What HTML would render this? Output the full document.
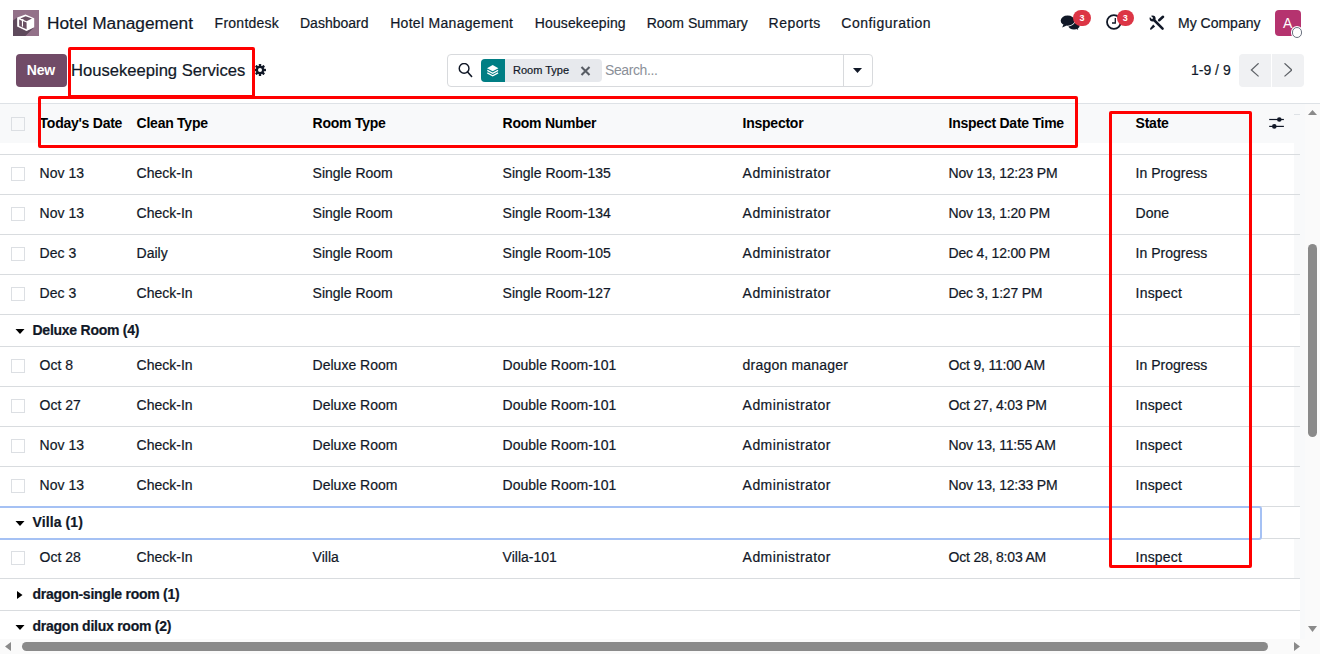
<!DOCTYPE html><html><head><meta charset="utf-8"><style>
*{margin:0;padding:0;box-sizing:border-box}
html,body{width:1320px;height:654px;overflow:hidden;background:#fff;font-family:"Liberation Sans",sans-serif}
.t{position:absolute;white-space:nowrap;-webkit-text-stroke:0.2px currentColor}
.a{position:absolute}
.cb{position:absolute;width:14px;height:14px;border:1px solid #dcdfe3;background:#fff;border-radius:0}
.sep{position:absolute;left:0;width:1300px;height:1px;background:#d9dcdf}
.rb{position:absolute;border:3px solid #ff0000;border-radius:2px}
</style></head><body>
<svg class="a" style="left:13px;top:10px" width="26" height="26" viewBox="0 0 26 26">
<rect width="26" height="26" fill="#937189"/>
<path d="M0 10.5 L4.2 7.4 L4.2 16.6 L13.5 21 L21.2 17.2 L12.4 26 L0 26 Z" fill="#5f4a5c"/>
<path d="M12.5 4.5 L21.2 8.2 L21.2 17.2 L13.5 21 L4.2 16.6 L4.2 7.4 Z" fill="#fff"/>
<path d="M7.3 8.6 L12.6 6.3 L19 8.4 L13.6 11.2 Z" fill="#6a5063"/>
<path d="M6.2 9.6 L13.6 12.6 L13.6 19.3 L6.2 15.9 Z" fill="#6a5063"/>
<rect x="7.7" y="9.2" width="2.8" height="1.1" fill="#fff"/><rect x="8.9" y="9.6" width="1.1" height="7" fill="#fff"/>
</svg>
<div class="t" style="left:47px;top:12.600000000000001px;font-size:17.3px;line-height:20px;font-weight:400;color:#111827;">Hotel Management</div>
<div class="t" style="left:214.6px;top:13.0px;font-size:14px;line-height:20px;font-weight:400;color:#111827;letter-spacing:0.25px">Frontdesk</div>
<div class="t" style="left:300px;top:13.0px;font-size:14px;line-height:20px;font-weight:400;color:#111827;letter-spacing:0px">Dashboard</div>
<div class="t" style="left:390.2px;top:13.0px;font-size:14px;line-height:20px;font-weight:400;color:#111827;letter-spacing:0.3px">Hotel Management</div>
<div class="t" style="left:534.8px;top:13.0px;font-size:14px;line-height:20px;font-weight:400;color:#111827;letter-spacing:0.12px">Housekeeping</div>
<div class="t" style="left:646.7px;top:13.0px;font-size:14px;line-height:20px;font-weight:400;color:#111827;letter-spacing:0px">Room Summary</div>
<div class="t" style="left:768.6px;top:13.0px;font-size:14px;line-height:20px;font-weight:400;color:#111827;letter-spacing:0.45px">Reports</div>
<div class="t" style="left:841.3px;top:13.0px;font-size:14px;line-height:20px;font-weight:400;color:#111827;letter-spacing:0.5px">Configuration</div>
<div class="t" style="left:1178px;top:13.2px;font-size:14px;line-height:20px;font-weight:400;color:#111827;">My Company</div>
<svg class="a" style="left:1058px;top:12px" width="24" height="22" viewBox="0 0 24 22">
<ellipse cx="16" cy="14" rx="5.6" ry="3.5" fill="#111827"/>
<path d="M17 16 L20.2 18 L19 14.5 Z" fill="#111827"/>
<ellipse cx="9.6" cy="8.7" rx="7.6" ry="5.9" fill="#fff"/>
<ellipse cx="9.6" cy="8.7" rx="6.9" ry="5.1" fill="#111827"/>
<path d="M5.5 12.2 L4.2 15.6 L8.8 13.4 Z" fill="#111827"/>
</svg>
<div class="a" style="left:1073px;top:10px;width:18px;height:16px;border-radius:8px;background:#dc3545;color:#fff;font-size:9px;font-weight:bold;line-height:16px;text-align:center">3</div>
<svg class="a" style="left:1105px;top:14px" width="18" height="18" viewBox="0 0 18 18">
<circle cx="8.9" cy="8" r="6.9" fill="none" stroke="#111827" stroke-width="1.8"/>
<path d="M10.3 3.9 V9 H7" fill="none" stroke="#111827" stroke-width="1.3"/>
</svg>
<div class="a" style="left:1116.5px;top:10px;width:17.5px;height:16px;border-radius:8px;background:#dc3545;color:#fff;font-size:9px;font-weight:bold;line-height:16px;text-align:center">3</div>
<svg class="a" style="left:1144px;top:10px" width="26" height="26" viewBox="0 0 26 26">
<path d="M10.5 10.5 L18.6 18.6" stroke="#111827" stroke-width="2.5" stroke-linecap="round"/>
<circle cx="8.6" cy="8.6" r="3" fill="#111827"/>
<path d="M8.6 8.6 L5 5" stroke="#fff" stroke-width="1.7"/>
<path d="M15.2 10.2 L19 6.8" stroke="#111827" stroke-width="2.6" stroke-linecap="round"/>
<path d="M9.2 14.6 L11.1 16.4 L7.5 19.6 L6.1 19.7 L6.2 18.2 Z" fill="#111827"/>
</svg>
<div class="a" style="left:1275px;top:10px;width:26px;height:26px;border-radius:4px;background:#b5336f"></div>
<div class="t" style="left:1283px;top:13.0px;font-size:14px;line-height:20px;font-weight:400;color:#fff;-webkit-text-stroke:0">A</div>
<div class="a" style="left:1291.5px;top:27px;width:10.5px;height:10.5px;border-radius:50%;background:#fff;border:1.6px solid #6b7280;box-shadow:0 0 0 1px #fff"></div>
<div class="a" style="left:16px;top:54px;width:51px;height:33px;border-radius:4px;background:#714b67"></div>
<div class="t" style="left:26.8px;top:59.8px;font-size:14px;line-height:20px;font-weight:700;color:#fff;letter-spacing:-0.2px;-webkit-text-stroke:0">New</div>
<div class="t" style="left:71px;top:61.0px;font-size:16.6px;line-height:20px;font-weight:400;color:#111827;">Housekeeping Services</div>
<svg class="a" style="left:254px;top:64px" width="12" height="12" viewBox="0 0 12 12">
<g fill="#111827"><circle cx="6" cy="6" r="4.2"/>
<rect x="4.8" y="0" width="2.4" height="12" rx="0.6"/>
<rect x="4.8" y="0" width="2.4" height="12" rx="0.6" transform="rotate(45 6 6)"/>
<rect x="4.8" y="0" width="2.4" height="12" rx="0.6" transform="rotate(90 6 6)"/>
<rect x="4.8" y="0" width="2.4" height="12" rx="0.6" transform="rotate(135 6 6)"/></g>
<circle cx="6" cy="6" r="2" fill="#fff"/></svg>
<div class="a" style="left:447px;top:54px;width:426px;height:33px;border:1px solid #d8dadd;border-radius:4px;background:#fff"></div>
<div class="a" style="left:843px;top:55px;width:1px;height:31px;background:#d8dadd"></div>
<svg class="a" style="left:458px;top:63px" width="15" height="15" viewBox="0 0 15 15">
<circle cx="6.1" cy="5.4" r="4.85" fill="none" stroke="#111827" stroke-width="1.45"/>
<path d="M9.6 8.9 L13.6 13.5" stroke="#111827" stroke-width="1.6" stroke-linecap="round"/></svg>
<div class="a" style="left:481px;top:59px;width:121px;height:23px;border-radius:4px;background:#e7e9ed"></div>
<div class="a" style="left:481px;top:59px;width:24px;height:23px;border-radius:4px 0 0 4px;background:#017e84"></div>
<svg class="a" style="left:486px;top:64px" width="14" height="14" viewBox="0 0 14 14">
<path d="M6.7 1.1 L12.4 4.2 L6.7 7.3 L1 4.2 Z" fill="#fff"/>
<path d="M1.3 6.4 L6.7 9.3 L12.1 6.4" fill="none" stroke="#fff" stroke-width="1.2"/>
<path d="M1.3 8.9 L6.7 11.8 L12.1 8.9" fill="none" stroke="#fff" stroke-width="1.2"/></svg>
<div class="t" style="left:513px;top:59.7px;font-size:11px;line-height:20px;font-weight:400;color:#111827;">Room Type</div>
<svg class="a" style="left:580px;top:66px" width="11" height="10" viewBox="0 0 11 10">
<path d="M1.5 1 L9.5 9 M9.5 1 L1.5 9" stroke="#575c64" stroke-width="2.1"/></svg>
<div class="t" style="left:605px;top:60.0px;font-size:14px;line-height:20px;font-weight:400;color:#8b9098;letter-spacing:-0.4px;-webkit-text-stroke:0">Search...</div>
<svg class="a" style="left:853px;top:68px" width="9" height="5" viewBox="0 0 9 5"><path d="M0 0 H9 L4.5 5 Z" fill="#111827"/></svg>
<div class="t" style="left:1191px;top:60.0px;font-size:14px;line-height:20px;font-weight:400;color:#111827;">1-9 / 9</div>
<div class="a" style="left:1239px;top:54px;width:65px;height:33px;border-radius:4px;background:#f0f1f3"></div>
<div class="a" style="left:1271px;top:54px;width:1px;height:33px;background:#fff"></div>
<svg class="a" style="left:1250px;top:63px" width="10" height="15" viewBox="0 0 10 15"><path d="M8.6 0.3 L1.4 7 L8.6 13.4" fill="none" stroke="#5f6368" stroke-width="1.25"/></svg>
<svg class="a" style="left:1282px;top:63px" width="10" height="15" viewBox="0 0 10 15"><path d="M2.5 0.3 L9.8 7 L2.5 13.4" fill="none" stroke="#5f6368" stroke-width="1.25"/></svg>
<div class="a" style="left:0;top:103px;width:1320px;height:1px;background:#dee2e6"></div>
<div class="a" style="left:0;top:104px;width:1305px;height:39px;background:#f8f9fa"></div>
<div class="a" style="left:1294px;top:143px;width:11px;height:496px;background:#f8f9fa"></div>
<div class="cb" style="left:11px;top:117px;background:#f8f9fa"></div>
<div class="t" style="left:39.6px;top:113.0px;font-size:14px;line-height:20px;font-weight:700;color:#000;letter-spacing:-0.25px;-webkit-text-stroke:0">Today's Date</div>
<div class="t" style="left:136.6px;top:113.0px;font-size:14px;line-height:20px;font-weight:700;color:#000;letter-spacing:-0.25px;-webkit-text-stroke:0">Clean Type</div>
<div class="t" style="left:312.6px;top:113.0px;font-size:14px;line-height:20px;font-weight:700;color:#000;letter-spacing:-0.25px;-webkit-text-stroke:0">Room Type</div>
<div class="t" style="left:502.6px;top:113.0px;font-size:14px;line-height:20px;font-weight:700;color:#000;letter-spacing:-0.25px;-webkit-text-stroke:0">Room Number</div>
<div class="t" style="left:742.6px;top:113.0px;font-size:14px;line-height:20px;font-weight:700;color:#000;letter-spacing:-0.25px;-webkit-text-stroke:0">Inspector</div>
<div class="t" style="left:948.6px;top:113.0px;font-size:14px;line-height:20px;font-weight:700;color:#000;letter-spacing:-0.25px;-webkit-text-stroke:0">Inspect Date Time</div>
<div class="t" style="left:1135.6px;top:113.0px;font-size:14px;line-height:20px;font-weight:700;color:#000;letter-spacing:-0.25px;-webkit-text-stroke:0">State</div>
<svg class="a" style="left:1269px;top:116px" width="16" height="14" viewBox="0 0 16 14">
<path d="M0.2 3.5 H14.9" stroke="#111827" stroke-width="1.2"/><circle cx="10.3" cy="3.5" r="2.3" fill="#111827"/>
<path d="M0.2 10.4 H14.9" stroke="#111827" stroke-width="1.2"/><circle cx="5.3" cy="10.4" r="2.3" fill="#111827"/></svg>
<div class="sep" style="top:154px"></div>
<div class="cb" style="left:11px;top:167px"></div>
<div class="t" style="left:39.6px;top:162.5px;font-size:14px;line-height:20px;font-weight:400;color:#111827;letter-spacing:0px">Nov 13</div>
<div class="t" style="left:136.6px;top:162.5px;font-size:14px;line-height:20px;font-weight:400;color:#111827;letter-spacing:0px">Check-In</div>
<div class="t" style="left:312.6px;top:162.5px;font-size:14px;line-height:20px;font-weight:400;color:#111827;letter-spacing:0px">Single Room</div>
<div class="t" style="left:502.6px;top:162.5px;font-size:14px;line-height:20px;font-weight:400;color:#111827;letter-spacing:0px">Single Room-135</div>
<div class="t" style="left:742.6px;top:162.5px;font-size:14px;line-height:20px;font-weight:400;color:#111827;letter-spacing:0.45px">Administrator</div>
<div class="t" style="left:948.6px;top:162.5px;font-size:14px;line-height:20px;font-weight:400;color:#111827;letter-spacing:-0.2px">Nov 13, 12:23 PM</div>
<div class="t" style="left:1135.6px;top:162.5px;font-size:14px;line-height:20px;font-weight:400;color:#111827;letter-spacing:0px">In Progress</div>
<div class="sep" style="top:194px"></div>
<div class="cb" style="left:11px;top:207px"></div>
<div class="t" style="left:39.6px;top:202.5px;font-size:14px;line-height:20px;font-weight:400;color:#111827;letter-spacing:0px">Nov 13</div>
<div class="t" style="left:136.6px;top:202.5px;font-size:14px;line-height:20px;font-weight:400;color:#111827;letter-spacing:0px">Check-In</div>
<div class="t" style="left:312.6px;top:202.5px;font-size:14px;line-height:20px;font-weight:400;color:#111827;letter-spacing:0px">Single Room</div>
<div class="t" style="left:502.6px;top:202.5px;font-size:14px;line-height:20px;font-weight:400;color:#111827;letter-spacing:0px">Single Room-134</div>
<div class="t" style="left:742.6px;top:202.5px;font-size:14px;line-height:20px;font-weight:400;color:#111827;letter-spacing:0.45px">Administrator</div>
<div class="t" style="left:948.6px;top:202.5px;font-size:14px;line-height:20px;font-weight:400;color:#111827;letter-spacing:-0.2px">Nov 13, 1:20 PM</div>
<div class="t" style="left:1135.6px;top:202.5px;font-size:14px;line-height:20px;font-weight:400;color:#111827;letter-spacing:0px">Done</div>
<div class="sep" style="top:234px"></div>
<div class="cb" style="left:11px;top:247px"></div>
<div class="t" style="left:39.6px;top:242.5px;font-size:14px;line-height:20px;font-weight:400;color:#111827;letter-spacing:0px">Dec 3</div>
<div class="t" style="left:136.6px;top:242.5px;font-size:14px;line-height:20px;font-weight:400;color:#111827;letter-spacing:0px">Daily</div>
<div class="t" style="left:312.6px;top:242.5px;font-size:14px;line-height:20px;font-weight:400;color:#111827;letter-spacing:0px">Single Room</div>
<div class="t" style="left:502.6px;top:242.5px;font-size:14px;line-height:20px;font-weight:400;color:#111827;letter-spacing:0px">Single Room-105</div>
<div class="t" style="left:742.6px;top:242.5px;font-size:14px;line-height:20px;font-weight:400;color:#111827;letter-spacing:0.45px">Administrator</div>
<div class="t" style="left:948.6px;top:242.5px;font-size:14px;line-height:20px;font-weight:400;color:#111827;letter-spacing:-0.2px">Dec 4, 12:00 PM</div>
<div class="t" style="left:1135.6px;top:242.5px;font-size:14px;line-height:20px;font-weight:400;color:#111827;letter-spacing:0px">In Progress</div>
<div class="sep" style="top:274px"></div>
<div class="cb" style="left:11px;top:287px"></div>
<div class="t" style="left:39.6px;top:282.5px;font-size:14px;line-height:20px;font-weight:400;color:#111827;letter-spacing:0px">Dec 3</div>
<div class="t" style="left:136.6px;top:282.5px;font-size:14px;line-height:20px;font-weight:400;color:#111827;letter-spacing:0px">Check-In</div>
<div class="t" style="left:312.6px;top:282.5px;font-size:14px;line-height:20px;font-weight:400;color:#111827;letter-spacing:0px">Single Room</div>
<div class="t" style="left:502.6px;top:282.5px;font-size:14px;line-height:20px;font-weight:400;color:#111827;letter-spacing:0px">Single Room-127</div>
<div class="t" style="left:742.6px;top:282.5px;font-size:14px;line-height:20px;font-weight:400;color:#111827;letter-spacing:0.45px">Administrator</div>
<div class="t" style="left:948.6px;top:282.5px;font-size:14px;line-height:20px;font-weight:400;color:#111827;letter-spacing:-0.2px">Dec 3, 1:27 PM</div>
<div class="t" style="left:1135.6px;top:282.5px;font-size:14px;line-height:20px;font-weight:400;color:#111827;letter-spacing:0.2px">Inspect</div>
<div class="sep" style="top:314px"></div>
<div class="a" style="left:1294px;top:315px;width:6px;height:31px;background:#fff"></div>
<svg class="a" style="left:15px;top:329px" width="10" height="5" viewBox="0 0 10 5"><path d="M0.5 0 H9.5 L5 5 Z" fill="#000"/></svg>
<div class="t" style="left:32.5px;top:320.0px;font-size:14px;line-height:20px;font-weight:700;color:#111827;letter-spacing:-0.25px">Deluxe Room (4)</div>
<div class="sep" style="top:346px"></div>
<div class="cb" style="left:11px;top:359px"></div>
<div class="t" style="left:39.6px;top:354.5px;font-size:14px;line-height:20px;font-weight:400;color:#111827;letter-spacing:0px">Oct 8</div>
<div class="t" style="left:136.6px;top:354.5px;font-size:14px;line-height:20px;font-weight:400;color:#111827;letter-spacing:0px">Check-In</div>
<div class="t" style="left:312.6px;top:354.5px;font-size:14px;line-height:20px;font-weight:400;color:#111827;letter-spacing:0px">Deluxe Room</div>
<div class="t" style="left:502.6px;top:354.5px;font-size:14px;line-height:20px;font-weight:400;color:#111827;letter-spacing:0px">Double Room-101</div>
<div class="t" style="left:742.6px;top:354.5px;font-size:14px;line-height:20px;font-weight:400;color:#111827;letter-spacing:0.2px">dragon manager</div>
<div class="t" style="left:948.6px;top:354.5px;font-size:14px;line-height:20px;font-weight:400;color:#111827;letter-spacing:-0.2px">Oct 9, 11:00 AM</div>
<div class="t" style="left:1135.6px;top:354.5px;font-size:14px;line-height:20px;font-weight:400;color:#111827;letter-spacing:0px">In Progress</div>
<div class="sep" style="top:386px"></div>
<div class="cb" style="left:11px;top:399px"></div>
<div class="t" style="left:39.6px;top:394.5px;font-size:14px;line-height:20px;font-weight:400;color:#111827;letter-spacing:0px">Oct 27</div>
<div class="t" style="left:136.6px;top:394.5px;font-size:14px;line-height:20px;font-weight:400;color:#111827;letter-spacing:0px">Check-In</div>
<div class="t" style="left:312.6px;top:394.5px;font-size:14px;line-height:20px;font-weight:400;color:#111827;letter-spacing:0px">Deluxe Room</div>
<div class="t" style="left:502.6px;top:394.5px;font-size:14px;line-height:20px;font-weight:400;color:#111827;letter-spacing:0px">Double Room-101</div>
<div class="t" style="left:742.6px;top:394.5px;font-size:14px;line-height:20px;font-weight:400;color:#111827;letter-spacing:0.45px">Administrator</div>
<div class="t" style="left:948.6px;top:394.5px;font-size:14px;line-height:20px;font-weight:400;color:#111827;letter-spacing:-0.2px">Oct 27, 4:03 PM</div>
<div class="t" style="left:1135.6px;top:394.5px;font-size:14px;line-height:20px;font-weight:400;color:#111827;letter-spacing:0.2px">Inspect</div>
<div class="sep" style="top:426px"></div>
<div class="cb" style="left:11px;top:439px"></div>
<div class="t" style="left:39.6px;top:434.5px;font-size:14px;line-height:20px;font-weight:400;color:#111827;letter-spacing:0px">Nov 13</div>
<div class="t" style="left:136.6px;top:434.5px;font-size:14px;line-height:20px;font-weight:400;color:#111827;letter-spacing:0px">Check-In</div>
<div class="t" style="left:312.6px;top:434.5px;font-size:14px;line-height:20px;font-weight:400;color:#111827;letter-spacing:0px">Deluxe Room</div>
<div class="t" style="left:502.6px;top:434.5px;font-size:14px;line-height:20px;font-weight:400;color:#111827;letter-spacing:0px">Double Room-101</div>
<div class="t" style="left:742.6px;top:434.5px;font-size:14px;line-height:20px;font-weight:400;color:#111827;letter-spacing:0.45px">Administrator</div>
<div class="t" style="left:948.6px;top:434.5px;font-size:14px;line-height:20px;font-weight:400;color:#111827;letter-spacing:-0.2px">Nov 13, 11:55 AM</div>
<div class="t" style="left:1135.6px;top:434.5px;font-size:14px;line-height:20px;font-weight:400;color:#111827;letter-spacing:0.2px">Inspect</div>
<div class="sep" style="top:466px"></div>
<div class="cb" style="left:11px;top:479px"></div>
<div class="t" style="left:39.6px;top:474.5px;font-size:14px;line-height:20px;font-weight:400;color:#111827;letter-spacing:0px">Nov 13</div>
<div class="t" style="left:136.6px;top:474.5px;font-size:14px;line-height:20px;font-weight:400;color:#111827;letter-spacing:0px">Check-In</div>
<div class="t" style="left:312.6px;top:474.5px;font-size:14px;line-height:20px;font-weight:400;color:#111827;letter-spacing:0px">Deluxe Room</div>
<div class="t" style="left:502.6px;top:474.5px;font-size:14px;line-height:20px;font-weight:400;color:#111827;letter-spacing:0px">Double Room-101</div>
<div class="t" style="left:742.6px;top:474.5px;font-size:14px;line-height:20px;font-weight:400;color:#111827;letter-spacing:0.45px">Administrator</div>
<div class="t" style="left:948.6px;top:474.5px;font-size:14px;line-height:20px;font-weight:400;color:#111827;letter-spacing:-0.2px">Nov 13, 12:33 PM</div>
<div class="t" style="left:1135.6px;top:474.5px;font-size:14px;line-height:20px;font-weight:400;color:#111827;letter-spacing:0.2px">Inspect</div>
<div class="sep" style="top:506px"></div>
<div class="a" style="left:1294px;top:507px;width:6px;height:31px;background:#fff"></div>
<svg class="a" style="left:15px;top:521px" width="10" height="5" viewBox="0 0 10 5"><path d="M0.5 0 H9.5 L5 5 Z" fill="#000"/></svg>
<div class="t" style="left:32.5px;top:512.0px;font-size:14px;line-height:20px;font-weight:700;color:#111827;letter-spacing:0.1px">Villa (1)</div>
<div class="sep" style="top:538px"></div>
<div class="cb" style="left:11px;top:551px"></div>
<div class="t" style="left:39.6px;top:546.5px;font-size:14px;line-height:20px;font-weight:400;color:#111827;letter-spacing:0px">Oct 28</div>
<div class="t" style="left:136.6px;top:546.5px;font-size:14px;line-height:20px;font-weight:400;color:#111827;letter-spacing:0px">Check-In</div>
<div class="t" style="left:312.6px;top:546.5px;font-size:14px;line-height:20px;font-weight:400;color:#111827;letter-spacing:0px">Villa</div>
<div class="t" style="left:502.6px;top:546.5px;font-size:14px;line-height:20px;font-weight:400;color:#111827;letter-spacing:0px">Villa-101</div>
<div class="t" style="left:742.6px;top:546.5px;font-size:14px;line-height:20px;font-weight:400;color:#111827;letter-spacing:0.45px">Administrator</div>
<div class="t" style="left:948.6px;top:546.5px;font-size:14px;line-height:20px;font-weight:400;color:#111827;letter-spacing:-0.2px">Oct 28, 8:03 AM</div>
<div class="t" style="left:1135.6px;top:546.5px;font-size:14px;line-height:20px;font-weight:400;color:#111827;letter-spacing:0.2px">Inspect</div>
<div class="sep" style="top:578px"></div>
<div class="a" style="left:1294px;top:579px;width:6px;height:31px;background:#fff"></div>
<svg class="a" style="left:17px;top:591px" width="6" height="8" viewBox="0 0 6 8"><path d="M0 0 V8 L5.5 4 Z" fill="#000"/></svg>
<div class="t" style="left:32.5px;top:584.0px;font-size:14px;line-height:20px;font-weight:700;color:#111827;letter-spacing:-0.25px">dragon-single room (1)</div>
<div class="sep" style="top:610px"></div>
<div class="a" style="left:1294px;top:611px;width:6px;height:31px;background:#fff"></div>
<svg class="a" style="left:15px;top:625px" width="10" height="5" viewBox="0 0 10 5"><path d="M0.5 0 H9.5 L5 5 Z" fill="#000"/></svg>
<div class="t" style="left:32.5px;top:616.0px;font-size:14px;line-height:20px;font-weight:700;color:#111827;letter-spacing:-0.25px">dragon dilux room (2)</div>
<div class="sep" style="top:642px"></div>
<div class="a" style="left:-3px;top:506px;width:1265px;height:34px;border:2px solid #a5c1f4;border-radius:3px"></div>
<div class="a" style="left:1294px;top:114px;width:6px;height:1px;background:#dee2e6"></div>
<div class="a" style="left:1305px;top:104px;width:15px;height:550px;background:#fafafa"></div>
<div class="a" style="left:1308px;top:244px;width:9px;height:193px;border-radius:4.5px;background:#8a8a8a"></div>
<svg class="a" style="left:1308px;top:110px" width="9" height="5" viewBox="0 0 9 5"><path d="M0 5 H9 L4.5 0 Z" fill="#8a8a8a"/></svg>
<svg class="a" style="left:1308px;top:626px" width="9" height="6" viewBox="0 0 9 6"><path d="M0 0 H9 L4.5 6 Z" fill="#8a8a8a"/></svg>
<div class="a" style="left:0;top:639px;width:1305px;height:15px;background:#fafafa"></div>
<div class="a" style="left:22px;top:642px;width:1246px;height:9px;border-radius:4.5px;background:#8a8a8a"></div>
<svg class="a" style="left:5px;top:642px" width="6" height="9" viewBox="0 0 6 9"><path d="M6 0 V9 L0 4.5 Z" fill="#8a8a8a"/></svg>
<svg class="a" style="left:1294px;top:642px" width="6" height="9" viewBox="0 0 6 9"><path d="M0 0 V9 L6 4.5 Z" fill="#8a8a8a"/></svg>
<div class="rb" style="left:68px;top:47px;width:187px;height:51px"></div>
<div class="rb" style="left:38px;top:96px;width:1040px;height:52px"></div>
<div class="rb" style="left:1109px;top:111px;width:143px;height:457px"></div>
</body></html>
